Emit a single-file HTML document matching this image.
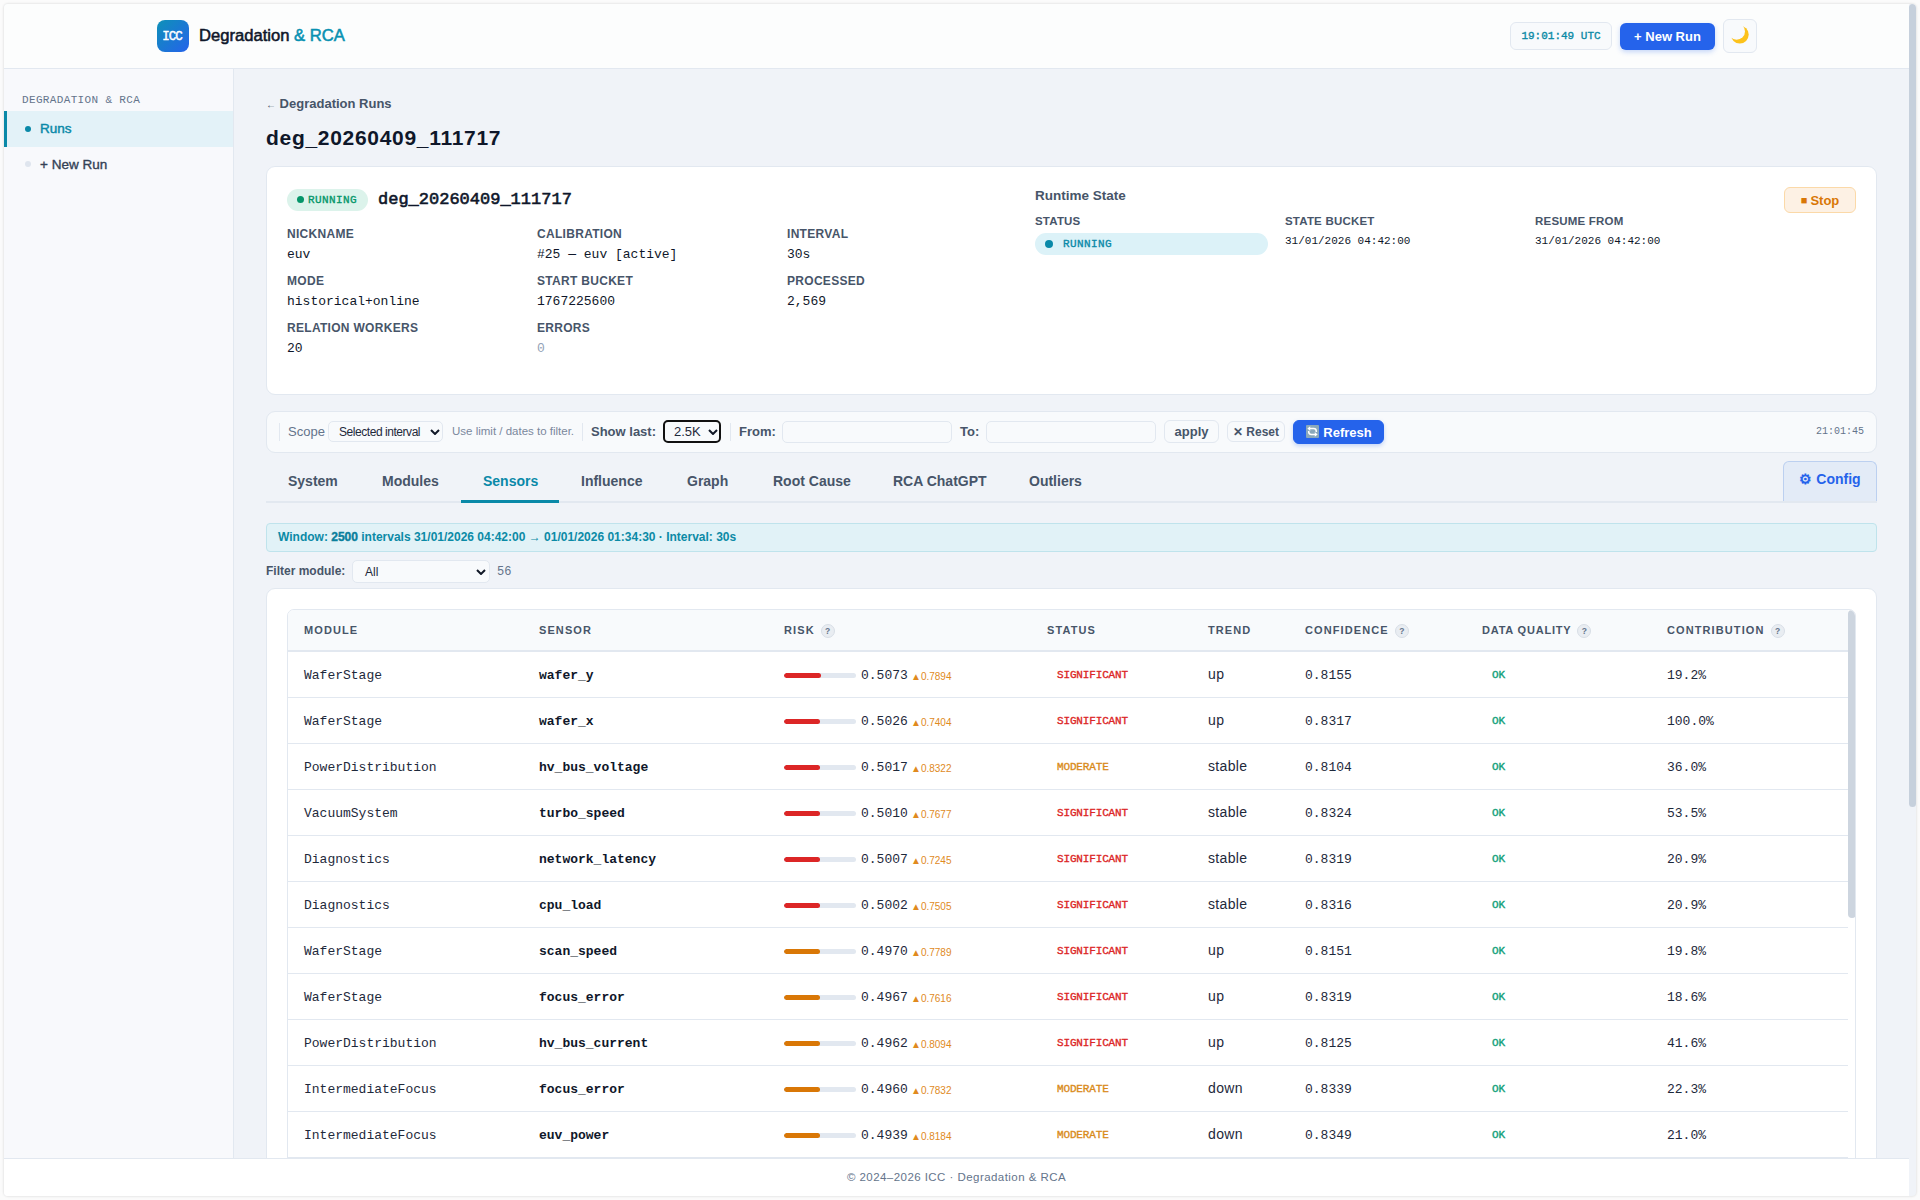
<!DOCTYPE html>
<html><head><meta charset="utf-8">
<style>
*{box-sizing:border-box;margin:0;padding:0}
html,body{width:1920px;height:1200px;overflow:hidden;background:#fbfbfb;font-family:"Liberation Sans",sans-serif;color:#0f172a}
.mono{font-family:"Liberation Mono",monospace}
.win{position:absolute;left:4px;top:4px;width:1912px;height:1192px;background:#f0f3f8;border-radius:4px;overflow:hidden;box-shadow:0 0 2px 1px rgba(0,0,0,.08)}
.abs{position:absolute}
/* header */
.hdr{position:absolute;left:0;top:0;width:1905px;height:65px;background:#fcfdfd;border-bottom:1px solid #e2e8f0}
.logo{position:absolute;left:153px;top:16px;width:32px;height:32px;border-radius:8px;background:linear-gradient(135deg,#0e91b8,#2563eb);color:#fff;font:12.5px "Liberation Mono",monospace;-webkit-text-stroke:.45px #fff;display:flex;align-items:center;justify-content:center;letter-spacing:-1px;padding-top:2px;padding-right:2px}
.brand{position:absolute;left:195px;top:22px;font-weight:normal;font-size:16.6px;letter-spacing:0;-webkit-text-stroke:.55px #0f172a;color:#0f172a;white-space:nowrap}
.brand span{color:#0891b2;-webkit-text-stroke:.55px #0891b2}
.clock{position:absolute;left:1506px;top:18px;width:102px;height:28px;border:1px solid #e2e8f0;border-radius:6px;background:#f8fafc;color:#0b8aa6;font:11px "Liberation Mono",monospace;-webkit-text-stroke:.35px #0b8aa6;display:flex;align-items:center;justify-content:center}
.newrun{position:absolute;left:1616px;top:19px;width:95px;height:27px;border-radius:6px;background:#2563eb;color:#fff;font-weight:bold;font-size:13px;display:flex;align-items:center;justify-content:center;box-shadow:0 2px 5px rgba(37,99,235,.25)}
.moon{position:absolute;left:1719px;top:15px;width:34px;height:34px;border:1px solid #e2e8f0;border-radius:6px;background:#f8fafc}
/* sidebar */
.side{position:absolute;left:0;top:65px;width:230px;height:1127px;background:#f8f9fc;border-right:1px solid #e2e8f0}
.side .cap{position:absolute;left:18px;top:25px;font:11px "Liberation Mono",monospace;letter-spacing:.35px;color:#64748b}
.side .item{position:absolute;left:0;width:229px;height:36px}
.side .active{top:42px;background:#e3f2f8;border-left:3px solid #0a89a8}
.side .dot{position:absolute;left:21px;top:15px;width:6px;height:6px;border-radius:50%}
.side .txt{position:absolute;left:36px;top:10px;font-size:13.5px;font-weight:bold}
/* main */
.main{position:absolute;left:230px;top:65px;width:1675px;height:1127px}
.back{position:absolute;left:32px;top:26.5px;font-weight:bold;font-size:13px;color:#475569;white-space:nowrap}
.back i{font-style:normal;font-size:10px;font-weight:normal}
.title{position:absolute;left:32px;top:57px;font-weight:bold;font-size:21px;letter-spacing:.7px;color:#0f172a}
.card{position:absolute;left:32px;top:97px;width:1611px;height:229px;background:#fff;border:1px solid #e2e8f0;border-radius:9px}
.badge{position:absolute;height:22px;border-radius:11px;background:#dcf3eb;color:#059669}
.lbl{position:absolute;font-weight:bold;font-size:12px;letter-spacing:.3px;color:#475569;white-space:nowrap}
.val{position:absolute;font:13px "Liberation Mono",monospace;color:#0f172a;white-space:nowrap}
.lbl11{position:absolute;font-weight:bold;font-size:11.5px;letter-spacing:.2px;color:#475569;white-space:nowrap}
.val11{position:absolute;font:11px "Liberation Mono",monospace;color:#0f172a;white-space:nowrap}

.fbar{position:absolute;left:32px;top:342px;width:1611px;height:42px;background:#f8fafc;border:1px solid #e2e8f0;border-radius:9px}
.sep{position:absolute;top:12px;width:1px;height:18px;background:#e2e8f0}
.ftxt{position:absolute;white-space:nowrap}
.sel{position:absolute;background:#f8fafc;border:1px solid #e2e8f0;border-radius:5px}
.chev{position:absolute;width:6px;height:6px;border-right:2px solid #111827;border-bottom:2px solid #111827;transform:rotate(45deg)}
.btn{position:absolute;border:1px solid #e2e8f0;border-radius:6px;background:#f8fafc;display:flex;align-items:center;justify-content:center;font-weight:bold;color:#475569;white-space:nowrap}
.tabs{position:absolute;left:32px;top:392px;width:1611px;height:42px;border-bottom:2px solid #e2e8f0}
.tab{position:absolute;top:12px;font-weight:bold;font-size:14px;color:#475569;white-space:nowrap}
.banner{position:absolute;left:32px;top:454px;width:1611px;height:29px;background:#e1f2f7;border:1px solid #bfe3ec;border-radius:4px;font-weight:bold;font-size:12px;color:#0b8aa6;white-space:nowrap;padding-left:11px;line-height:27px}
.banner b{color:#0a7f9c;-webkit-text-stroke:.4px #0a7f9c}
.tcard{position:absolute;left:32px;top:519px;width:1611px;height:700px;background:#fff;border:1px solid #e2e8f0;border-radius:9px}
.tbl{position:absolute;left:20px;top:20px;width:1569px;height:700px;border:1px solid #e2e8f0;border-radius:7px;overflow:hidden}
.th{position:absolute;left:0;top:0;width:1560px;height:42px;background:#f8fafc;border-bottom:2px solid #e2e8f0}
.th div{position:absolute;top:14px;font-weight:bold;font-size:11px;letter-spacing:1.1px;color:#475569;white-space:nowrap}
.help{display:inline-block;vertical-align:middle;margin-left:6px;margin-top:-2px;position:relative;top:1px;width:14px;height:14px;border-radius:50%;background:#e9edf2;border:1px solid #d8dee6;font-size:8.5px;font-weight:bold;line-height:12px;text-align:center;letter-spacing:0;color:#64748b}
.row{position:absolute;left:0;width:1560px;height:46px;border-bottom:1px solid #e2e8f0}
.row div{position:absolute;white-space:nowrap}
.c1{left:16px;top:16px;font:13px "Liberation Mono",monospace;color:#1e293b}
.c2{left:251px;top:16px;font:bold 13px "Liberation Mono",monospace;color:#0f172a}
.trk{left:496px;top:21px;width:72px;height:5px;border-radius:3px;background:#e2e8f0;overflow:hidden}
.fill{left:0;top:0;height:5px;border-radius:3px}
.c3{left:573px;top:16px;font:13px "Liberation Mono",monospace;color:#1e293b}
.c3s{left:623px;top:19px;font-size:10px;color:#e08a1e}
.c4{left:769px;top:17px;font:11px "Liberation Mono",monospace;letter-spacing:-.15px;-webkit-text-stroke:.35px currentColor}
.c5{left:920px;top:14px;font-size:14px;letter-spacing:.35px;color:#1e293b}
.c6{left:1017px;top:16px;font:13px "Liberation Mono",monospace;color:#1e293b}
.c7{left:1204px;top:17px;font:11px "Liberation Mono",monospace;color:#10a07a;-webkit-text-stroke:.4px #10a07a}
.c8{left:1379px;top:16px;font:13px "Liberation Mono",monospace;color:#1e293b}
.footer{position:absolute;left:0;top:1154px;width:1905px;height:38px;background:#fff;border-top:1px solid #e2e8f0;font-size:11.5px;letter-spacing:.45px;color:#64748b;text-align:center;line-height:37px}
.sb{position:absolute;background:#c6d0dc;border-radius:4px}
</style></head><body>
<div class="win">
  <div class="hdr">
    <div class="logo">ICC</div>
    <div class="brand">Degradation <span>&amp; RCA</span></div>
    <div class="clock">19:01:49 UTC</div>
    <div class="newrun">+ New Run</div>
    <div class="moon"><svg width="34" height="34" viewBox="0 0 34 34" style="position:absolute;left:-1px;top:-1px"><defs><mask id="mm"><rect width="34" height="34" fill="#fff"/><circle cx="13.6" cy="12.4" r="8.4" fill="#000"/></mask></defs><circle cx="16.8" cy="15.6" r="8.9" fill="#fcc21b" mask="url(#mm)"/></svg></div>
  </div>
  <div class="side">
    <div class="cap">DEGRADATION &amp; RCA</div>
    <div class="item active"><div class="dot" style="background:#0a89a8;left:18px"></div><div class="txt" style="color:#0a89a8;left:33px;font-weight:normal;-webkit-text-stroke:.45px #0a89a8">Runs</div></div>
    <div class="item" style="top:78px"><div class="dot" style="background:#dfe5ee;top:14px"></div><div class="txt" style="color:#334155;font-weight:normal;-webkit-text-stroke:.35px #334155">+ New Run</div></div>
  </div>
  <div class="main">
    <div class="back"><i>←</i> Degradation Runs</div>
    <div class="title">deg_20260409_111717</div>
    <div class="card">
      <div class="badge" style="left:20px;top:22px;width:81px"><div class="abs" style="left:10px;top:7px;width:7px;height:7px;border-radius:50%;background:#059669"></div><div class="abs mono" style="left:21px;top:4px;font-size:11px;letter-spacing:.4px;line-height:14px;-webkit-text-stroke:.35px #059669">RUNNING</div></div>
      <div class="abs mono" style="left:111px;top:22px;font-size:17px;line-height:22px;color:#0f172a;-webkit-text-stroke:.6px #0f172a">deg_20260409_111717</div>
      <div class="lbl" style="left:20px;top:60px">NICKNAME</div><div class="val" style="left:20px;top:80px">euv</div>
      <div class="lbl" style="left:270px;top:60px">CALIBRATION</div><div class="val" style="left:270px;top:80px">#25 — euv [active]</div>
      <div class="lbl" style="left:520px;top:60px">INTERVAL</div><div class="val" style="left:520px;top:80px">30s</div>
      <div class="lbl" style="left:20px;top:107px">MODE</div><div class="val" style="left:20px;top:127px">historical+online</div>
      <div class="lbl" style="left:270px;top:107px">START BUCKET</div><div class="val" style="left:270px;top:127px">1767225600</div>
      <div class="lbl" style="left:520px;top:107px">PROCESSED</div><div class="val" style="left:520px;top:127px">2,569</div>
      <div class="lbl" style="left:20px;top:154px">RELATION WORKERS</div><div class="val" style="left:20px;top:174px">20</div>
      <div class="lbl" style="left:270px;top:154px">ERRORS</div><div class="val" style="left:270px;top:174px;color:#94a3b8">0</div>
      <div class="abs" style="left:768px;top:21px;font-weight:bold;font-size:13.5px;color:#475569">Runtime State</div>
      <div class="lbl11" style="left:768px;top:48px">STATUS</div>
      <div class="abs" style="left:768px;top:66px;width:233px;height:22px;border-radius:11px;background:#dcf2f8"><div class="abs" style="left:10px;top:7px;width:8px;height:8px;border-radius:50%;background:#0a89a8"></div><div class="abs mono" style="left:28px;top:4px;font-size:11px;letter-spacing:.4px;line-height:14px;color:#0a89a8;-webkit-text-stroke:.35px #0a89a8">RUNNING</div></div>
      <div class="lbl11" style="left:1018px;top:48px">STATE BUCKET</div><div class="val11" style="left:1018px;top:68px">31/01/2026 04:42:00</div>
      <div class="lbl11" style="left:1268px;top:48px">RESUME FROM</div><div class="val11" style="left:1268px;top:68px">31/01/2026 04:42:00</div>
      <div class="abs" style="left:1517px;top:20px;width:72px;height:26px;border:1px solid #fbd9a8;border-radius:6px;background:#fdf1e4;color:#d97706;font-weight:bold;font-size:13px;display:flex;align-items:center;justify-content:center"><span style="font-size:11px;margin-right:3px">■</span>Stop</div>
    </div>
    <div class="fbar"><div class="abs" style="left:0;top:-1px">
      <div class="sep" style="left:12px"></div>
      <div class="ftxt" style="left:21px;top:13px;font-size:13px;color:#64748b">Scope</div>
      <div class="sel" style="left:61px;top:10px;width:115px;height:21px"><div class="ftxt" style="left:10px;top:3px;font-size:12px;letter-spacing:-.45px;color:#1e293b">Selected interval</div><svg class="abs" width="10" height="6" viewBox="0 0 10 6" style="left:101px;top:7px"><path d="M1 1l4 4 4-4" stroke="#111827" stroke-width="2" fill="none"/></svg></div>
      <div class="ftxt" style="left:185px;top:14px;font-size:11.5px;color:#7b889c">Use limit / dates to filter.</div>
      <div class="sep" style="left:315px"></div>
      <div class="ftxt" style="left:324px;top:13px;font-size:13px;font-weight:bold;color:#475569">Show last:</div>
      <div class="sel" style="left:396px;top:9px;width:58px;height:23px;border:2px solid #111;border-radius:5px;background:#f8fafc"><div class="ftxt" style="left:9px;top:2px;font-size:13px;color:#1e293b">2.5K</div><svg class="abs" width="10" height="6" viewBox="0 0 10 6" style="left:43px;top:7px"><path d="M1 1l4 4 4-4" stroke="#111827" stroke-width="2" fill="none"/></svg></div>
      <div class="sep" style="left:463px"></div>
      <div class="ftxt" style="left:472px;top:13px;font-size:13px;font-weight:bold;color:#475569">From:</div>
      <div class="sel" style="left:515px;top:10px;width:170px;height:22px;border-radius:5px"></div>
      <div class="ftxt" style="left:693px;top:13px;font-size:13px;font-weight:bold;color:#475569">To:</div>
      <div class="sel" style="left:719px;top:10px;width:170px;height:22px;border-radius:5px"></div>
      <div class="btn" style="left:897px;top:9px;width:55px;height:23px;font-size:13px">apply</div>
      <div class="btn" style="left:960px;top:10px;width:58px;height:21px;font-size:12px">✕ Reset</div>
      <div class="btn" style="left:1026px;top:9px;width:91px;height:24px;font-size:13px;background:#2563eb;border-color:#2563eb;color:#fff;box-shadow:0 2px 4px rgba(37,99,235,.25)"><svg width="13" height="13" viewBox="0 0 13 13" style="margin-right:4px;margin-left:1px;margin-top:-1px"><rect x="0" y="0" width="13" height="13" rx="1" fill="#8aa8bb"/><path d="M10.3 7V6.2C10.3 4.6 9.2 3.6 7.6 3.6H3.6M2.7 6v.8c0 1.6 1.1 2.6 2.7 2.6h4" stroke="#fff" stroke-width="1.5" fill="none"/><path d="M1.4 3.6L4.2 1.3V5.9Z M11.6 9.4L8.8 7.1V11.7Z" fill="#fff"/></svg>Refresh</div>
      <div class="ftxt mono" style="left:1549px;top:15px;font-size:10px;color:#64748b">21:01:45</div>
    </div></div>
    <div class="tabs">
      <div class="tab" style="left:22px">System</div>
      <div class="tab" style="left:116px">Modules</div>
      <div class="tab" style="left:217px;color:#0a89a8">Sensors</div>
      <div class="abs" style="left:195px;top:39px;width:98px;height:3px;background:#0a89a8"></div>
      <div class="tab" style="left:315px">Influence</div>
      <div class="tab" style="left:421px">Graph</div>
      <div class="tab" style="left:507px">Root Cause</div>
      <div class="tab" style="left:627px">RCA ChatGPT</div>
      <div class="tab" style="left:763px">Outliers</div>
      <div class="abs" style="left:1517px;top:0;width:94px;height:40px;background:#e3ebf7;border:1px solid #bcd0f0;border-bottom:none;border-radius:6px 6px 0 0;color:#2563eb;font-weight:bold;font-size:14px;text-align:center;line-height:34px">⚙ Config</div>
    </div>
    <div class="banner">Window: <b>2500</b> intervals 31/01/2026 04:42:00 → 01/01/2026 01:34:30 · Interval: 30s</div>
    <div class="ftxt" style="left:32px;top:495px;font-size:12px;font-weight:bold;color:#475569">Filter module:</div>
    <div class="sel" style="left:118px;top:491px;width:138px;height:23px"><div class="ftxt" style="left:12px;top:4px;font-size:12px;color:#1e293b">All</div><svg class="abs" width="10" height="6" viewBox="0 0 10 6" style="left:123px;top:8px"><path d="M1 1l4 4 4-4" stroke="#111827" stroke-width="2" fill="none"/></svg></div>
    <div class="ftxt mono" style="left:263px;top:496px;font-size:12px;color:#64748b">56</div>
    <div class="tcard">
      <div class="tbl">
        <div class="th"><div style="left:16px">MODULE</div><div style="left:251px">SENSOR</div><div style="left:496px">RISK<span class="help">?</span></div><div style="left:759px">STATUS</div><div style="left:920px">TREND</div><div style="left:1017px">CONFIDENCE<span class="help">?</span></div><div style="left:1194px;letter-spacing:.8px">DATA QUALITY<span class="help">?</span></div><div style="left:1379px">CONTRIBUTION<span class="help">?</span></div></div>
        <div class="row" style="top:42px"><div class="c1">WaferStage</div><div class="c2">wafer_y</div><div class="trk"><div class="fill" style="width:37px;background:#dc2626"></div></div><div class="c3">0.5073</div><div class="c3s">▲0.7894</div><div class="c4" style="color:#dc2626">SIGNIFICANT</div><div class="c5">up</div><div class="c6">0.8155</div><div class="c7">OK</div><div class="c8">19.2%</div></div>
<div class="row" style="top:88px"><div class="c1">WaferStage</div><div class="c2">wafer_x</div><div class="trk"><div class="fill" style="width:36px;background:#dc2626"></div></div><div class="c3">0.5026</div><div class="c3s">▲0.7404</div><div class="c4" style="color:#dc2626">SIGNIFICANT</div><div class="c5">up</div><div class="c6">0.8317</div><div class="c7">OK</div><div class="c8">100.0%</div></div>
<div class="row" style="top:134px"><div class="c1">PowerDistribution</div><div class="c2">hv_bus_voltage</div><div class="trk"><div class="fill" style="width:36px;background:#dc2626"></div></div><div class="c3">0.5017</div><div class="c3s">▲0.8322</div><div class="c4" style="color:#d98a1a">MODERATE</div><div class="c5">stable</div><div class="c6">0.8104</div><div class="c7">OK</div><div class="c8">36.0%</div></div>
<div class="row" style="top:180px"><div class="c1">VacuumSystem</div><div class="c2">turbo_speed</div><div class="trk"><div class="fill" style="width:36px;background:#dc2626"></div></div><div class="c3">0.5010</div><div class="c3s">▲0.7677</div><div class="c4" style="color:#dc2626">SIGNIFICANT</div><div class="c5">stable</div><div class="c6">0.8324</div><div class="c7">OK</div><div class="c8">53.5%</div></div>
<div class="row" style="top:226px"><div class="c1">Diagnostics</div><div class="c2">network_latency</div><div class="trk"><div class="fill" style="width:36px;background:#dc2626"></div></div><div class="c3">0.5007</div><div class="c3s">▲0.7245</div><div class="c4" style="color:#dc2626">SIGNIFICANT</div><div class="c5">stable</div><div class="c6">0.8319</div><div class="c7">OK</div><div class="c8">20.9%</div></div>
<div class="row" style="top:272px"><div class="c1">Diagnostics</div><div class="c2">cpu_load</div><div class="trk"><div class="fill" style="width:36px;background:#dc2626"></div></div><div class="c3">0.5002</div><div class="c3s">▲0.7505</div><div class="c4" style="color:#dc2626">SIGNIFICANT</div><div class="c5">stable</div><div class="c6">0.8316</div><div class="c7">OK</div><div class="c8">20.9%</div></div>
<div class="row" style="top:318px"><div class="c1">WaferStage</div><div class="c2">scan_speed</div><div class="trk"><div class="fill" style="width:36px;background:#d97706"></div></div><div class="c3">0.4970</div><div class="c3s">▲0.7789</div><div class="c4" style="color:#dc2626">SIGNIFICANT</div><div class="c5">up</div><div class="c6">0.8151</div><div class="c7">OK</div><div class="c8">19.8%</div></div>
<div class="row" style="top:364px"><div class="c1">WaferStage</div><div class="c2">focus_error</div><div class="trk"><div class="fill" style="width:36px;background:#d97706"></div></div><div class="c3">0.4967</div><div class="c3s">▲0.7616</div><div class="c4" style="color:#dc2626">SIGNIFICANT</div><div class="c5">up</div><div class="c6">0.8319</div><div class="c7">OK</div><div class="c8">18.6%</div></div>
<div class="row" style="top:410px"><div class="c1">PowerDistribution</div><div class="c2">hv_bus_current</div><div class="trk"><div class="fill" style="width:36px;background:#d97706"></div></div><div class="c3">0.4962</div><div class="c3s">▲0.8094</div><div class="c4" style="color:#dc2626">SIGNIFICANT</div><div class="c5">up</div><div class="c6">0.8125</div><div class="c7">OK</div><div class="c8">41.6%</div></div>
<div class="row" style="top:456px"><div class="c1">IntermediateFocus</div><div class="c2">focus_error</div><div class="trk"><div class="fill" style="width:36px;background:#d97706"></div></div><div class="c3">0.4960</div><div class="c3s">▲0.7832</div><div class="c4" style="color:#d98a1a">MODERATE</div><div class="c5">down</div><div class="c6">0.8339</div><div class="c7">OK</div><div class="c8">22.3%</div></div>
<div class="row" style="top:502px"><div class="c1">IntermediateFocus</div><div class="c2">euv_power</div><div class="trk"><div class="fill" style="width:36px;background:#d97706"></div></div><div class="c3">0.4939</div><div class="c3s">▲0.8184</div><div class="c4" style="color:#d98a1a">MODERATE</div><div class="c5">down</div><div class="c6">0.8349</div><div class="c7">OK</div><div class="c8">21.0%</div></div>
<div class="row" style="top:548px"><div class="c1">IntermediateFocus</div><div class="c2">euv_wavelength</div><div class="trk"><div class="fill" style="width:35px;background:#d97706"></div></div><div class="c3">0.4921</div><div class="c3s">▲0.8001</div><div class="c4" style="color:#d98a1a">MODERATE</div><div class="c5">down</div><div class="c6">0.8302</div><div class="c7">OK</div><div class="c8">20.1%</div></div>

        <div class="sb" style="left:1560px;top:0;width:8px;height:308px;background:#cdd5df"></div>
      </div>
    </div>
  </div>
  <div class="footer">© 2024–2026 ICC · Degradation &amp; RCA</div>
  <div class="sb" style="left:1905px;top:0;width:7px;height:803px"></div>
</div>
</body></html>
